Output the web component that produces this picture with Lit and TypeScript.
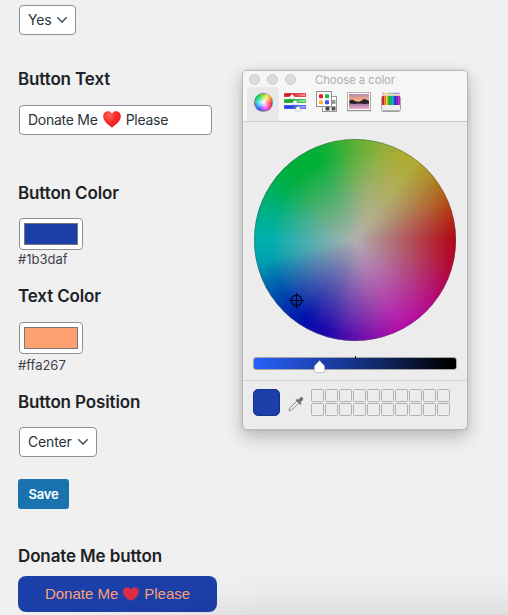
import { LitElement, html, svg, css } from "lit";
import { customElement, property } from "lit/decorators.js";

@customElement("heart-icon")
class HeartIcon extends LitElement {
  @property({ type: Boolean }) glossy = false;
  static styles = css`
    :host { display: inline-flex; }
    svg { display: block; width: 100%; height: 100%; }
  `;
  render() {
    return html`<svg viewBox="0 0 18 17" preserveAspectRatio="none">
      <defs>
        <radialGradient id="g" cx="0.35" cy="0.25" r="0.8">
          <stop offset="0" stop-color="#ff6a5c" />
          <stop offset="0.45" stop-color="#fb2f2c" />
          <stop offset="1" stop-color="#e2181f" />
        </radialGradient>
      </defs>
      <path
        fill=${this.glossy ? "url(#g)" : "#dd2e44"}
        d=${this.glossy
          ? "M9 2.6C7.8.9 6.400.3 4.800.3 2 .3.2 2.500.200 5.300.2 10 4.500 13.200 9 16.700 13.500 13.200 17.800 10 17.800 5.300 17.800 2.500 16 .3 13.200.3 11.600.3 10.200.9 9 2.600Z"
          : "M9 2.9C8 1 6.400.3 4.800.3 2.200.3 0 2.500 0 5.400 0 10.500 4.500 14.500 9 16.800 13.500 14.500 18 10.500 18 5.400 18 2.500 15.800.3 13.200.3 11.600.3 10 1 9 2.900Z"}
      />
    </svg>`;
  }
}

@customElement("settings-form")
class SettingsForm extends LitElement {
  static styles = css`
    :host {
      display: flex;
      flex-direction: column;
      align-items: flex-start;
      width: 220px;
      padding: 5px 0 0 18px;
      box-sizing: border-box;
      font: 14px/20px Inter, "Liberation Sans", sans-serif;
      color: #2c3338;
    }
    h2 {
      margin: 0;
      font-size: 17px;
      line-height: 24px;
      font-weight: 600;
      letter-spacing: -0.13px;
      color: #1d2327;
      white-space: nowrap;
    }
    .box {
      display: flex;
      align-items: center;
      box-sizing: border-box;
      height: 30px;
      margin-left: 1px;
      padding: 0 8px;
      border: 1px solid #8c8f94;
      border-radius: 4px;
      background: #fff;
      white-space: nowrap;
    }
    .yes { width: 57px; margin-bottom: 32px; letter-spacing: -0.15px; }
    .center { width: 78px; margin: 13px 0 22px 1px; letter-spacing: -0.15px; }
    .select { justify-content: space-between; padding-right: 7px; }
    .chevron { width: 12px; height: 8px; display: block; }
    .field { width: 193px; margin: 14px 0 46px 1px; letter-spacing: -0.26px; }
    .field heart-icon { width: 18px; height: 17px; margin: 0 5px 1px 5px; }
    .well {
      box-sizing: border-box;
      width: 64px;
      height: 32px;
      margin-left: 1px;
      padding: 4px;
      border: 1px solid #8c8f94;
      border-radius: 4px;
      background: #fff;
    }
    .well.first { margin-top: 13px; }
    .well.second { margin-top: 14px; }
    .fill { height: 100%; box-sizing: border-box; border: 1px solid #777; }
    .hex { font-size: 13px; line-height: 20px; color: #3c434a; letter-spacing: 0; }
    .hex.first { margin: -1px 0 15px; }
    .hex.second { margin: 1px 0 15px; }
    .save {
      box-sizing: border-box;
      width: 51px;
      height: 30px;
      margin-bottom: 35px;
      border: 0;
      border-radius: 3px;
      background: #1a73ae;
      color: #fff;
      font: 600 13px/30px Inter, sans-serif;
      letter-spacing: -0.25px;
      padding: 0;
      text-align: center;
    }
    .donate {
      display: flex;
      align-items: center;
      justify-content: center;
      width: 199px;
      height: 36px;
      margin-top: 8px;
      border: 0;
      padding: 0;
      border-radius: 8px;
      background: #1b40aa;
      color: #ffa073;
      font: 15px/20px "Liberation Sans", Arial, sans-serif;
      white-space: nowrap;
    }
    .donate heart-icon { width: 16px; height: 14px; margin: 0 5px 0 5px; }
  `;
  private chevron = () => html`<svg class="chevron" viewBox="0 0 12 8">
    <path d="M1.300 1.300 6 6 10.700 1.300" fill="none" stroke="#50575e" stroke-width="1.600" />
  </svg>`;
  private well(label: string, color: string, place: string) {
    return html`<div class="well ${place}"><div class="fill" style="background:${color}"></div></div>
      <div class="hex ${place}">${label}</div>`;
  }
  render() {
    return html`
      <div class="box select yes"><span>Yes</span>${this.chevron()}</div>
      <h2>Button Text</h2>
      <div class="box field"><span>Donate Me</span><heart-icon glossy></heart-icon><span>Please</span></div>
      <h2>Button Color</h2>
      ${this.well("#1b3daf", "#1b40aa", "first")}
      <h2>Text Color</h2>
      ${this.well("#ffa267", "#ffa071", "second")}
      <h2>Button Position</h2>
      <div class="box select center"><span>Center</span>${this.chevron()}</div>
      <button class="save">Save</button>
      <h2>Donate Me button</h2>
      <button class="donate"><span>Donate Me</span><heart-icon></heart-icon><span>Please</span></button>
    `;
  }
}

@customElement("color-panel")
class ColorPanel extends LitElement {
  static styles = css`
    :host {
      display: block;
      box-sizing: border-box;
      width: 226px;
      height: 360px;
      border: 1px solid #b9b9b9;
      border-radius: 5px;
      background: #ececec;
      overflow: hidden;
      box-shadow: 0 7px 18px rgba(0, 0, 0, 0.24), 0 0 4px rgba(0, 0, 0, 0.1);
      font: 11.3px/16px Inter, "Liberation Sans", sans-serif;
    }
    .head { height: 50px; background: #f6f6f6; border-bottom: 1px solid #cdcdcd; }
    .title { display: grid; grid-template-columns: 66px 1fr 66px; height: 16px; align-items: center; color: #adadad; text-align: center; white-space: nowrap; letter-spacing: -0.05px; }
    .title span { padding-top: 1px; }
    .lights { display: flex; gap: 7px; padding-left: 6px; }
    .lights i { width: 11px; height: 11px; box-sizing: border-box; border-radius: 50%; background: #dcdcdc; border: 1px solid #c9c9c9; }
    .tools { display: flex; padding-left: 4px; height: 34px; }
    .tool { width: 32px; height: 34px; display: flex; align-items: center; justify-content: center; padding-bottom: 4px; box-sizing: border-box; }
    .tool.on { background: #e8e8e8; border-radius: 4px 4px 0 0; }
    .tool svg { width: 26px; height: 22px; display: block; }
    .mini {
      width: 19px; height: 19px; border-radius: 50%; box-sizing: border-box;
      border: 1px solid rgba(90, 90, 90, 0.4);
      background: radial-gradient(circle, #fff 2%, rgba(255, 255, 255, 0) 62%),
        conic-gradient(#8be03c, #fff04a 30deg, #ff9a3c 60deg, #ff3040 95deg, #ff3fa8 130deg, #e54dff 160deg, #5b50ff 205deg, #2e8bff 235deg, #16d4f0 270deg, #0fd85a 315deg, #8be03c);
    }
    .wheel {
      width: 202px; height: 202px; margin: 17px 0 0 11px; border-radius: 50%;
      background: conic-gradient(#5cb036, #8cb038 15deg, #acac36 27deg, #b0ac34 38deg, #b08c28 50deg, #b25c1a 64deg, #b42812 77deg, #b40010 90deg, #b40028 103deg, #b40060 120deg, #b60894 138deg, #b60cac 152deg, #9410ac 165deg, #5c0eac 181deg, #2008ac 197deg, #0010ac 212deg, #0038ae 228deg, #0068b0 243deg, #00a0b0 257deg, #00b0ae 270deg, #00b086 288deg, #00b056 303deg, #00b038 318deg, #00b036 335deg, #24b036 347deg, #5cb036);
    }
    .wheel svg { width: 202px; height: 202px; display: block; }
    .slider { position: relative; box-sizing: border-box; width: 204px; height: 13px; margin: 16px 0 0 10px; border: 1px solid #a3a3a3; border-radius: 3px; background: linear-gradient(90deg, #2860fa, #1b40aa 36%, #102a6e 60%, #000 96%); }
    .knob { position: absolute; left: 59px; top: 1px; width: 13px; height: 15px; }
    .tick { position: absolute; left: 101px; top: -2px; width: 1px; height: 3px; background: #111; }
    .foot { display: flex; height: 49px; margin-top: 10px; padding: 8px 0 0 10px; box-sizing: border-box; border-top: 1px solid #d0d0d0; }
    .chip { width: 27px; height: 27px; box-sizing: border-box; border-radius: 5px; background: #1b40aa; border: 1px solid #153386; }
    .drop { width: 18px; height: 18px; margin: 6px 6px 0 7px; }
    .cells { display: grid; grid-template-columns: repeat(10, 13px); grid-template-rows: repeat(2, 13px); gap: 1px; }
    .cells i { border: 1px solid #b2b2b2; border-radius: 1.5px; }
  `;
  render() {
    const pencils = ["#e33030", "#f2902c", "#e9df35", "#32b53c", "#12c484", "#22a9d8", "#2a44e0", "#7a2be0", "#d330c9"];
    const bars: [number, string, string, number][] = [
      [3, "#d8151d", "#ff9b9b", 10],
      [9, "#17a52f", "#a9f5b4", 13],
      [15, "#2440dc", "#a9b4ff", 16],
    ];
    const dots: [number, number, string][] = [
      [5, 4, "#f4122a"], [11, 4, "#12c04a"], [5, 10, "#fbb62c"], [11, 10, "#3f4df5"],
    ];
    return html`
      <div class="head">
        <div class="title"><div class="lights"><i></i><i></i><i></i></div><span>Choose a color</span></div>
        <div class="tools">
          <div class="tool on"><div class="mini"></div></div>
          <div class="tool">
            <svg viewBox="0 0 26 22">
              ${bars.map(([y, a, b, k], n) => svg`
                <defs><linearGradient id=${"b" + n}><stop offset="0.300" stop-color=${a}/><stop offset="1" stop-color=${b}/></linearGradient></defs>
                <rect x="2.500" y=${y - 0.500} width="21" height="3" fill=${`url(#b${n})`} stroke=${a} stroke-opacity="0.700"/>
                <path d=${`M${k} ${y}l2.300 2.400v2.600h-4.600v-2.600z`} fill="#fff" stroke="#999" stroke-width="0.400"/>`)}
            </svg>
          </div>
          <div class="tool">
            <svg viewBox="0 0 26 22">
              <rect x="8.500" y="5.500" width="14" height="15" fill="#fdfdfd" stroke="#999"/>
              <rect x="17.500" y="9" width="4" height="4" fill="#999"/><rect x="11.500" y="15.500" width="4" height="4" fill="#444"/><rect x="17.500" y="15.500" width="4" height="4" fill="#555"/>
              <rect x="2.500" y="0.500" width="15" height="15" fill="#fff" stroke="#909090"/>
              ${dots.map(([x, y, c]) => svg`<rect x=${x} y=${y - 0.700} width="4" height="4" rx="0.700" fill=${c}/>`)}
            </svg>
          </div>
          <div class="tool">
            <svg viewBox="0 0 26 22">
              <defs><linearGradient id="sky" x2="0" y2="1"><stop offset="0" stop-color="#b78bb4"/><stop offset="0.450" stop-color="#ffae78"/><stop offset="0.650" stop-color="#a47ba4"/><stop offset="1" stop-color="#efb0c6"/></linearGradient></defs>
              <rect x="1.500" y="1.500" width="23" height="18" fill="#fff" stroke="#b0b0b0"/>
              <path d="M1 19.700h24" stroke="#888"/>
              <rect x="3" y="3" width="20" height="15" fill="url(#sky)"/>
              <path d="M3 10l3-1.500 3 1.500 3 1 3-1 3-2 2 .5 3 1.500v2.500l-5 .5-5-.5-5 .5-4-.5z" fill="#23222e"/>
            </svg>
          </div>
          <div class="tool">
            <svg viewBox="0 0 26 22">
              <rect x="3.500" y="5.500" width="19" height="14.500" rx="1.500" fill="#ededed" stroke="#a6a6a6"/>
              <path d="M4.500 20.200h17" stroke="#888"/>
              ${pencils.map((c, i) => svg`
                <path d=${`M${4 + i * 2} 5.500l1-4 1 4z`} fill="#d8bf9c"/><path d=${`M${4.400 + i * 2} 3l.6-2 .6 2z`} fill=${c}/>
                <rect x=${4 + i * 2} y="5" width="2" height="9" fill=${c}/><rect x=${5.500 + i * 2} y="5" width="0.500" height="9" fill="#000" opacity="0.350"/>`)}
            </svg>
          </div>
        </div>
      </div>
      <div class="wheel">
        <svg viewBox="0 0 202 202">
          <defs>
            <radialGradient id="soft" gradientUnits="userSpaceOnUse" cx="110" cy="105" r="93" fx="101" fy="101">
              <stop offset="0" stop-color="#b0b0b0"/><stop offset="1" stop-color="#b0b0b0" stop-opacity="0"/>
            </radialGradient>
          </defs>
          <circle cx="101" cy="101" r="100.500" fill="url(#soft)" stroke="#555" stroke-opacity="0.500" stroke-width="0.800"/>
          <g fill="none" stroke="#020420" stroke-width="1.200"><circle cx="42.500" cy="161.500" r="5.300"/><path d="M35 161.500h15M42.500 154v15"/></g>
        </svg>
      </div>
      <div class="slider">
        <div class="tick"></div>
        <svg class="knob" viewBox="0 0 13 15"><path d="M6.500 1.500 11.700 7v5q0 1.500-1.500 1.500H2.800q-1.500 0-1.500-1.500V7z" fill="#fff" stroke="#777" stroke-width="0.400"/></svg>
      </div>
      <div class="foot">
        <div class="chip"></div>
        <svg class="drop" viewBox="0 0 18 18">
          <path d="M10 6 3.200 12.800q-1 1.200-1.200 3 2-.3 3-1.200L11.800 8" fill="#f0f0f0" stroke="#8e8e8e"/>
          <path d="M8.500 5l1.300-1 1.500.8 1.800-2q1.500-1.300 2.600-.2t0 2.600l-2 1.900 .8 1.500-1 1.300z" fill="#707070"/>
        </svg>
        <div class="cells">${Array.from({ length: 20 }, () => html`<i></i>`)}</div>
      </div>
    `;
  }
}

@customElement("app-root")
class AppRoot extends LitElement {
  static styles = css`
    :host { display: block; position: relative; width: 508px; height: 615px; overflow: hidden; background: #f0f0f0; }
    .shade { position: absolute; left: 0; right: 0; bottom: 0; height: 42px; background: linear-gradient(rgba(0, 0, 0, 0), rgba(0, 0, 0, 0.025) 50%, rgba(0, 0, 0, 0.08)); mask-image: linear-gradient(90deg, transparent 12%, #000 55%); }
    color-panel { position: absolute; left: 242px; top: 70px; }
  `;
  render() {
    return html`<settings-form></settings-form><div class="shade"></div><color-panel></color-panel>`;
  }
}
